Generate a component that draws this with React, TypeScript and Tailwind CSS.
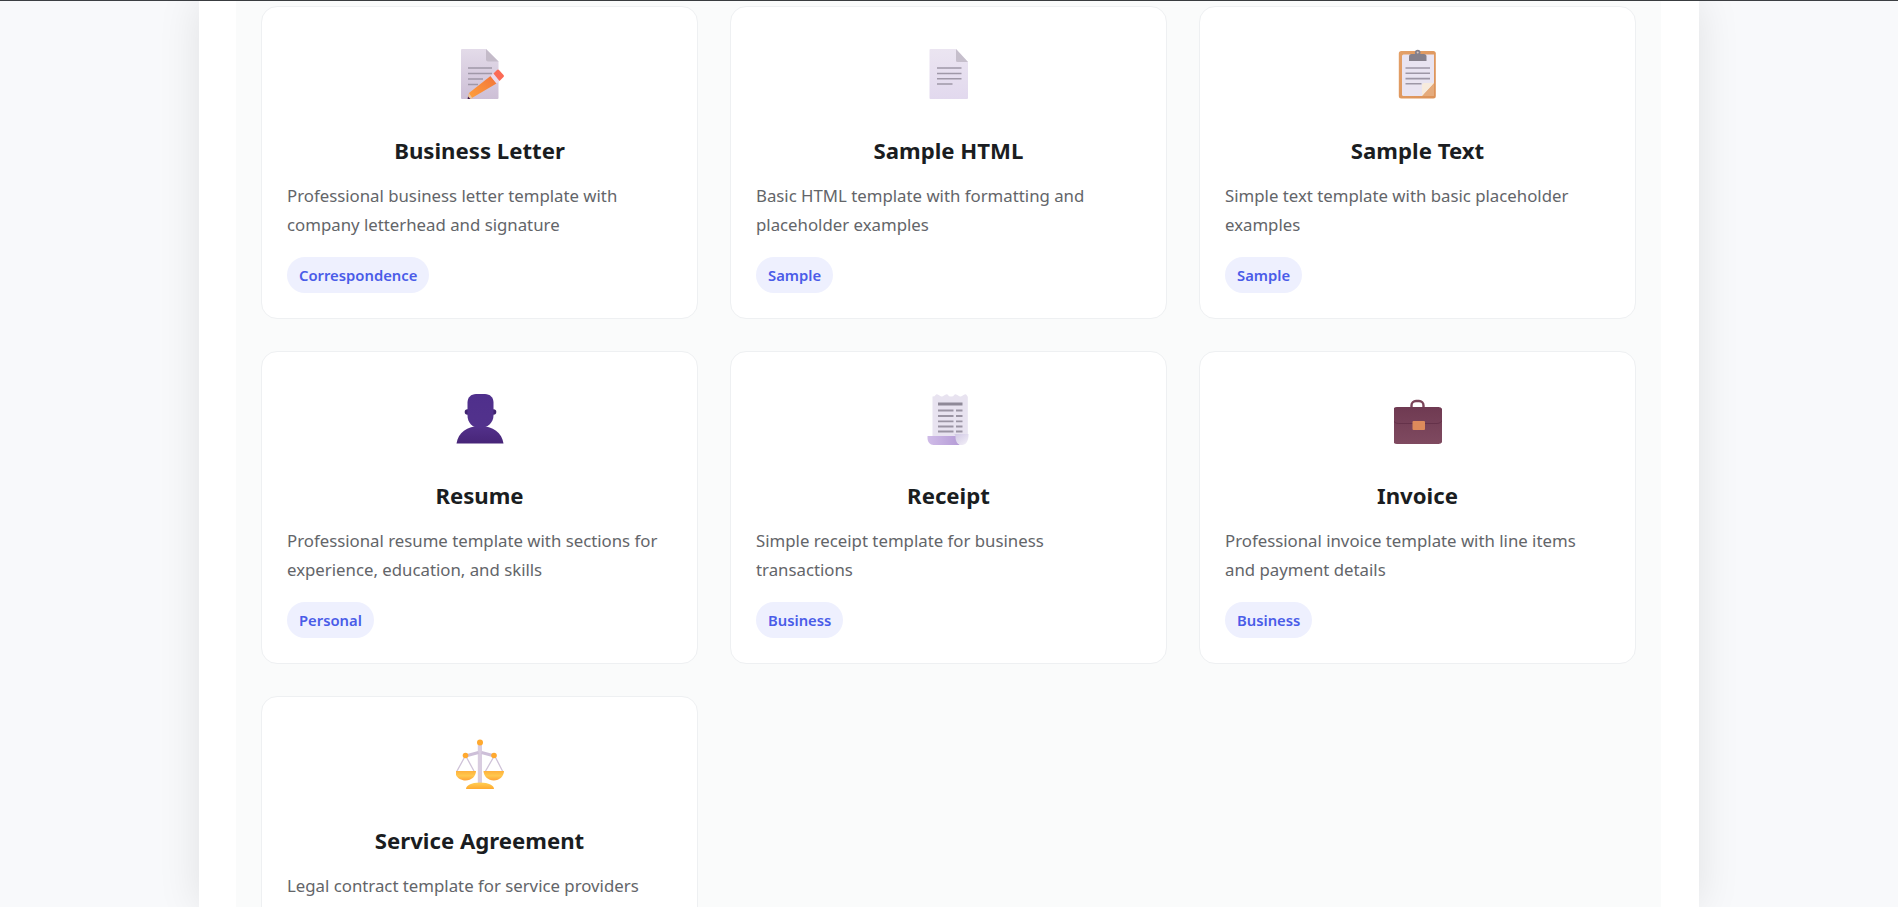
const LetterIcon = () => (
  <svg width="48" height="56" viewBox="16 10 48 56">
    <defs>
      <linearGradient id="letterPaper" x1="0" y1="0" x2="0" y2="1">
        <stop offset="0" stopColor="#e3dbe9" />
        <stop offset="1" stopColor="#cdbfd6" />
      </linearGradient>
      <linearGradient id="pencilBody" x1="0" y1="1" x2="1" y2="0">
        <stop offset="0" stopColor="#ffa13c" />
        <stop offset="1" stopColor="#f2743a" />
      </linearGradient>
    </defs>
    <path d="M22 14h24l12.500 12.500V63a1 1 0 0 1-1 1H22a1 1 0 0 1-1-1V15a1 1 0 0 1 1-1z" fill="url(#letterPaper)" />
    <path d="M46 14l12.500 12.500H48a2 2 0 0 1-2-2z" fill="#c4bbc9" />
    <path d="M28 33h24M28 38.500h24M28 44h15M28 49.500h10" stroke="#a098a8" strokeWidth="1.500" />
    <path d="M31 63.500l-3-0.500 1-5 21.500-17 6 7.500z" fill="url(#pencilBody)" />
    <path d="M29 58l-1 5.500 4.500 0z" fill="#e8c6a0" />
    <path d="M28 61.500l-0.400 2.500 2.800 0z" fill="#3d1a4a" />
    <path d="M50.500 41l3-2.500 6 7.500-3 2.500z" fill="#ecd9ea" />
    <path d="M53.500 38.500l3.500-3.500a1.500 1.500 0 0 1 2 0l4.500 5a1.500 1.500 0 0 1 0 2L59.500 46z" fill="#fb6a55" />
  </svg>
);

const DocIcon = () => (
  <svg width="48" height="56" viewBox="14.500 10 48 56">
    <defs>
      <linearGradient id="docPaper" x1="0" y1="0" x2="0" y2="1">
        <stop offset="0" stopColor="#ebe5f1" />
        <stop offset="1" stopColor="#e2d9ee" />
      </linearGradient>
    </defs>
    <path d="M20 14h25.500l12 13v36a1 1 0 0 1-1 1H20a1 1 0 0 1-1-1V15a1 1 0 0 1 1-1z" fill="url(#docPaper)" />
    <path d="M45.500 14l12 13H47a1.500 1.500 0 0 1-1.500-1.500z" fill="#c6bfcc" />
    <path d="M26.500 33h24.500M26.500 38.500h24.500M26.500 43.800h24.500M26.500 49h15.500" stroke="#9f98a8" strokeWidth="1.600" />
  </svg>
);

const ClipboardIcon = () => (
  <svg width="48" height="56" viewBox="13.500 10 48 56">
    <defs>
      <linearGradient id="clipBoard" x1="0" y1="0" x2="1" y2="1">
        <stop offset="0" stopColor="#e3a068" />
        <stop offset="1" stopColor="#dc9258" />
      </linearGradient>
    </defs>
    <rect x="18.300" y="16" width="37" height="47.500" rx="2.500" fill="url(#clipBoard)" />
    <path d="M23 19.500h30.500v28.500l-12 13H23a1.500 1.500 0 0 1-1.500-1.500V21a1.500 1.500 0 0 1 1.500-1.500z" fill="#e9e4f1" />
    <path d="M41.500 61l12-13v13z" fill="#e5ab7c" />
    <path d="M41.500 61l12-13h-9.500a2.500 2.500 0 0 0-2.500 2.500z" fill="#f7ebdd" />
    <path d="M25 33h24.500M25 38.300h24.500M25 43.600h24.500M25 48.800h16" stroke="#9d97a6" strokeWidth="1.600" />
    <path d="M31 19h12.500c1.500 0 2.500 1 2.500 2.500V26H28.500v-4.500c0-1.500 1-2.500 2.500-2.500z" fill="#85808b" />
    <circle cx="37.200" cy="17.500" r="2.800" fill="#85808b" />
    <circle cx="37.200" cy="17.500" r="1" fill="#d9c7c0" />
  </svg>
);

const PersonIcon = () => (
  <svg width="48" height="56" viewBox="16 10 48 56">
    <defs>
      <linearGradient id="personHead" x1="0" y1="0" x2="0" y2="1">
        <stop offset="0" stopColor="#4f2f8c" />
        <stop offset="1" stopColor="#52328c" />
      </linearGradient>
      <linearGradient id="personBody" x1="0" y1="0" x2="0" y2="1">
        <stop offset="0" stopColor="#53318b" />
        <stop offset="1" stopColor="#472578" />
      </linearGradient>
    </defs>
    <circle cx="27.500" cy="32" r="2.800" fill="#40246f" />
    <circle cx="53.500" cy="32" r="2.800" fill="#40246f" />
    <path d="M16.500 63.500C18 53 27 46 40 46s22 7 23.500 17.500z" fill="url(#personBody)" />
    <path d="M36 14h9c5 0 8.500 3.500 8.500 8.500v13c0 7-6 12.500-13.500 12.500s-12.500-5.500-12.500-12.500v-13C27.500 17.500 31 14 36 14z" fill="url(#personHead)" />
  </svg>
);

const ReceiptIcon = () => (
  <svg width="48" height="56" viewBox="14.500 10 48 56">
    <defs>
      <linearGradient id="receiptCurl" x1="0" y1="0" x2="1" y2="0">
        <stop offset="0" stopColor="#d0bce8" />
        <stop offset="1" stopColor="#b59cd6" />
      </linearGradient>
      <linearGradient id="receiptTip" x1="0" y1="0" x2="1" y2="1">
        <stop offset="0" stopColor="#cfc6e3" />
        <stop offset="1" stopColor="#f4f1f9" />
      </linearGradient>
    </defs>
    <path d="M17 56h32v9H23c-3.500 0-6-3-6-7z" fill="url(#receiptCurl)" />
    <path d="M22 16.500q2.400 0 3.100-1.500t3.100 0 3.100 1.500 3.100-1.500 3.100 0 3.100 1.500 3.100-1.500 3.100 0 3.100 1.500 3.100-1.500 3.100 0 1.200 1.500V56H22z" fill="#e8e3f0" />
    <path d="M43 54c1.500 0 2 1.500 2 3 0 4 2 8 5.500 8h1c4 0 6.500-4 6.500-10v-1z" fill="url(#receiptTip)" />
    <path d="M27.500 24h24.500" stroke="#8f8998" strokeWidth="3" />
    <path d="M27.500 30.500h15.500M27.500 36h15.500M27.500 41.300h15.500M27.500 46.500h15.500M27.500 51.500h15.500" stroke="#9a94a3" strokeWidth="1.800" />
    <path d="M45.500 30.500h6.500M45.500 36h6.500M45.500 41.300h6.500M45.500 46.500h6.500M45.500 51.500h6.500" stroke="#9a94a3" strokeWidth="1.800" />
  </svg>
);

const BriefcaseIcon = () => (
  <svg width="48" height="56" viewBox="13.500 10 48 56">
    <defs>
      <linearGradient id="caseBody" x1="0" y1="0" x2="0" y2="1">
        <stop offset="0" stopColor="#6f3a52" />
        <stop offset="1" stopColor="#7f4a60" />
      </linearGradient>
    </defs>
    <path d="M31 28v-2.500c0-2.500 2-4.500 4.500-4.500h3c2.500 0 4.500 2 4.500 4.500V28" fill="none" stroke="#7a4459" strokeWidth="2.400" />
    <rect x="12.500" y="27" width="49.500" height="37" rx="4" fill="url(#caseBody)" />
    <path d="M12.500 40c1 2 3 3.500 5.500 3.500h38.500c2.500 0 4.500-1.500 5.500-3.500" fill="none" stroke="#65324a" strokeWidth="1" />
    <rect x="32" y="41" width="12.500" height="9" rx="1" fill="#dd8a5b" />
  </svg>
);

const ScalesIcon = () => (
  <svg width="48" height="56" viewBox="16 10 48 56">
    <defs>
      <linearGradient id="scalePan" x1="0" y1="0" x2="0" y2="1">
        <stop offset="0" stopColor="#ffb13b" />
        <stop offset="0.500" stopColor="#ffc84f" />
        <stop offset="1" stopColor="#ffa336" />
      </linearGradient>
      <linearGradient id="scaleBase" x1="0" y1="0" x2="0" y2="1">
        <stop offset="0" stopColor="#ffcf55" />
        <stop offset="1" stopColor="#ffa92f" />
      </linearGradient>
    </defs>
    <path d="M37.800 18h4.200v42h-4.200z" fill="#d9cde0" />
    <path d="M25.500 31l13-3.500M54.500 31l-13-3.500" stroke="#cdbfd8" strokeWidth="3" />
    <path d="M25.500 30.500L16.500 47M25.500 30.500L34.500 47M54.500 30.500L45 47M54.500 30.500L63 47" stroke="#cfc3d8" strokeWidth="1.300" fill="none" />
    <path d="M15 46h21c0 5-4.500 9.500-10.500 9.500S15 51 15 46z" fill="url(#scalePan)" />
    <path d="M43.500 46h20.500c0 5-4.500 9.500-10.200 9.500S43.500 51 43.500 46z" fill="url(#scalePan)" />
    <path d="M26 64c0-3.500 5-6.500 14-6.500s14 3 14 6.500z" fill="url(#scaleBase)" />
    <circle cx="40" cy="17.500" r="3" fill="#ffa92f" />
    <circle cx="25.500" cy="30.500" r="2.800" fill="#ffa92f" />
    <circle cx="54" cy="30.500" r="2.800" fill="#ffa92f" />
  </svg>
);

const templates = [
  { icon: <LetterIcon />, title: "Business Letter", text: "Professional business letter template with company letterhead and signature", tag: "Correspondence" },
  { icon: <DocIcon />, title: "Sample HTML", text: "Basic HTML template with formatting and placeholder examples", tag: "Sample" },
  { icon: <ClipboardIcon />, title: "Sample Text", text: "Simple text template with basic placeholder examples", tag: "Sample" },
  { icon: <PersonIcon />, title: "Resume", text: "Professional resume template with sections for experience, education, and skills", tag: "Personal" },
  { icon: <ReceiptIcon />, title: "Receipt", text: "Simple receipt template for business transactions", tag: "Business" },
  { icon: <BriefcaseIcon />, title: "Invoice", text: "Professional invoice template with line items and payment details", tag: "Business" },
  { icon: <ScalesIcon />, title: "Service Agreement", text: "Legal contract template for service providers", tag: "" },
];

const App = () => {
  return (
    <div className="h-[907px] overflow-hidden bg-[#f8f9fb] font-['Noto_Sans','Open_Sans',sans-serif]">
      <div className="h-px bg-[#3c3f43]" />
      <main className="mx-auto w-[1500px] h-[906px] overflow-hidden bg-white pl-[37px] pr-[38px] shadow-[0_0_40px_rgba(0,0,0,0.1)]">
        <section className="h-full bg-[#fafbfb] px-[25px] pt-[5px]">
          <div className="grid grid-cols-3 gap-8">
            {templates.map((t) => (
              <article
                key={t.title}
                className="h-[313px] rounded-2xl border border-[#eef0f2] bg-white px-[25px] pt-[38px]"
              >
                <div className="flex justify-center">{t.icon}</div>
                <h3 className="mt-[35px] text-center text-[22.200px] leading-[29px] font-bold text-[#1a1d21]">
                  {t.title}
                </h3>
                <p className="mt-[17px] h-[58px] pr-[3px] text-[16.800px] leading-[28.800px] text-[#636569]">{t.text}</p>
                {t.tag && (
                  <span className="mt-[17px] inline-block rounded-full bg-[#eef0fe] px-[12px] text-[14.800px] leading-[36px] font-semibold text-[#4a5ce8]">
                    {t.tag}
                  </span>
                )}
              </article>
            ))}
          </div>
        </section>
      </main>
    </div>
  );
};

export default App;
